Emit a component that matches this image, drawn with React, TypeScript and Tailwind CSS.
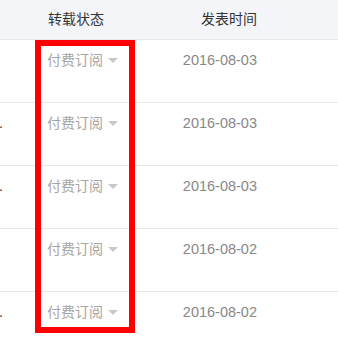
import React from "react";

const rows = [
  { date: "2016-08-03", dot: false },
  { date: "2016-08-03", dot: true },
  { date: "2016-08-03", dot: true },
  { date: "2016-08-02", dot: false },
  { date: "2016-08-02", dot: true },
];

function Caret() {
  return (
    <svg width="10" height="5" viewBox="0 0 10 5" className="ml-[5px] mt-[1px]">
      <path d="M0 0 L10 0 L5 5 Z" fill="#c9c9c9" />
    </svg>
  );
}

export default function App() {
  return (
    <div
      className="relative w-[338px] h-[354px] overflow-hidden bg-white antialiased"
      style={{ fontFamily: '"Liberation Sans", "Noto Sans CJK SC", sans-serif' }}
    >
      <div className="flex items-center h-[40px] bg-[#f4f5f9] border-b border-[#e6e8ec] text-[14px] text-[#333]">
        <div className="w-[48px]" />
        <div className="w-[90px]">转载状态</div>
        <div className="w-[119px] text-right">发表时间</div>
      </div>
      {rows.map((r, i) => (
        <div key={i} className="flex items-start h-[63px] border-b border-[#e8e8e8] pt-[10px] text-[14px] leading-[20px]">
          <div className="w-[47px] h-[20px] text-[#333]">
            {r.dot ? <span className="ml-[-1px]">.</span> : null}
          </div>
          <div className="w-[91px] h-[20px] flex items-center text-[#a6a6a6]">
            <span>付费订阅</span>
            <Caret />
          </div>
          <div className="w-[119px] h-[20px] text-right text-[#888] text-[14.5px]">{r.date}</div>
        </div>
      ))}
      <div className="absolute left-[35px] top-[40px] w-[100px] h-[293px] border-[6px] border-[#ff0000]" />
    </div>
  );
}
